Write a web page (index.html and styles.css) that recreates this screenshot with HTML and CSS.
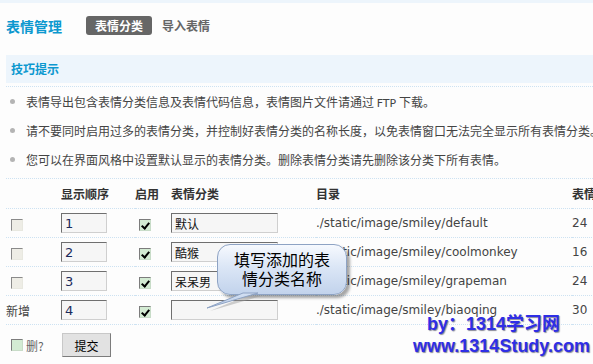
FILE: index.html
```html
<!DOCTYPE html>
<html>
<head>
    <meta charset="utf-8" />
    <title>表情管理</title>
    <link rel="stylesheet" href="styles.css">
</head>
<body>
<div class="topbar"></div>
<div class="head">
    <h1>表情管理</h1>
    <span class="tab on">表情分类</span>
    <span class="tab">导入表情</span>
</div>

<div class="tips">
    <h3>技巧提示</h3>
    <ul>
        <li>表情导出包含表情分类信息及表情代码信息，表情图片文件请通过 <span class="en">FTP</span> 下载。</li>
        <li>请不要同时启用过多的表情分类，并控制好表情分类的名称长度，以免表情窗口无法完全显示所有表情分类。</li>
        <li>您可以在界面风格中设置默认显示的表情分类。删除表情分类请先删除该分类下所有表情。</li>
    </ul>
</div>

<table class="grid">
    <colgroup>
        <col class="c1"><col class="c2"><col class="c3"><col class="c4"><col class="c5"><col class="c6">
    </colgroup>
    <tr>
        <th></th><th>显示顺序</th><th>启用</th><th>表情分类</th><th>目录</th><th>表情数</th>
    </tr>
    <tr>
        <td><span class="chk off"></span></td>
        <td><input class="inputClass order" value="1"></td>
        <td><span class="chk on"></span></td>
        <td><input class="inputClass name" value="默认"></td>
        <td class="dir">./static/image/smiley/default</td>
        <td class="num">24</td>
    </tr>
    <tr>
        <td><span class="chk off"></span></td>
        <td><input class="inputClass order" value="2"></td>
        <td><span class="chk on"></span></td>
        <td><input class="inputClass name" value="酷猴"></td>
        <td class="dir">./static/image/smiley/coolmonkey</td>
        <td class="num">16</td>
    </tr>
    <tr>
        <td><span class="chk off"></span></td>
        <td><input class="inputClass order" value="3"></td>
        <td><span class="chk on"></span></td>
        <td><input class="inputClass name" value="呆呆男"></td>
        <td class="dir">./static/image/smiley/grapeman</td>
        <td class="num">24</td>
    </tr>
    <tr>
        <td class="new">新增</td>
        <td><input class="inputClass order" value="4"></td>
        <td><span class="chk on"></span></td>
        <td><input class="inputClass name" value=""></td>
        <td class="dir">./static/image/smiley/biaoqing</td>
        <td class="num">30</td>
    </tr>
</table>

<div class="foot">
    <span class="chk del"></span><span class="delLabel">删?</span>
    <button class="buttonClass">提交</button>
</div>

<!-- callout over the table -->
<div class="bubble">填写添加的表<br>情分类名称</div>
<svg class="tail" width="70" height="30" viewBox="0 0 70 30">
    <defs>
        <linearGradient id="tailFill" x1="0" y1="0" x2="0" y2="1">
            <stop offset="0" stop-color="#d3e0f3"/>
            <stop offset="1" stop-color="#b9cbe6"/>
        </linearGradient>
    </defs>
    <polygon points="45,11 60,11 9,26" fill="#9a9a9a" opacity="0.45"/>
    <polygon points="42,8 57,8 6,23" fill="url(#tailFill)" stroke="#8ea3c4" stroke-width="1"/>
</svg>

<div class="mark">
    <div class="l1">by：1314学习网</div>
    <div class="l2">www.1314Study.com</div>
</div>
</body>
</html>
```

FILE: styles.css
```css
body {
    margin: 0; background-color: #fdfdfd; overflow: hidden;
    font-family: "Noto Sans CJK SC", "DejaVu Sans", sans-serif;
    font-size: 12px; color: #444;
}
.topbar {
    height: 3px; background-color: #edf5fc;
}
.head {
    height: 45px; padding-left: 6px;
    display: flex; align-items: center;
}
.head h1 {
    margin: 0 24px 0 0; font-size: 14px; font-weight: bold; color: #0c98cf;
}
.tab {
    height: 19px; line-height: 19px; padding: 0 9px; border-radius: 3px;
    font-weight: bold; color: #666; margin-right: 1px;
}
.tab.on {
    background-color: #666; color: #fff;
}
.tips {
    margin: 7px 0 0 6px;
}
.tips h3 {
    margin: 0; height: 28px; line-height: 28px; padding-left: 5px;
    background-color: #edf5fc; color: #0c98cf; font-size: 12px;
}
.tips ul {
    list-style: none; margin: 3px 0 0 0; padding: 0 0 4px 0;
    border-top: 1px dotted #cde2f2; border-bottom: 1px dotted #cde2f2;
}
.tips li {
    position: relative; height: 29px; line-height: 29px; padding-left: 20px;
    white-space: nowrap;
}
.tips li:before {
    content: ""; position: absolute; left: 4px; top: 12px;
    width: 5px; height: 5px; border-radius: 50%; background-color: #b4b4b4;
}
.en {
    font-family: "DejaVu Sans", sans-serif; font-size: 11px; color: #444;
}
.grid {
    margin-left: 6px; width: 640px; table-layout: fixed; border-collapse: collapse;
}
.c1 { width: 55px; }
.c2 { width: 74px; }
.c3 { width: 36px; }
.c4 { width: 145px; }
.c5 { width: 256px; }
.c6 { width: 74px; }
.grid th, .grid td {
    padding: 0; text-align: left; border-bottom: 1px dotted #cde2f2;
    white-space: nowrap; overflow: hidden;
}
.grid th {
    height: 29px; font-weight: bold; color: #333;
}
.grid td {
    height: 28px;
}
.grid td:first-child .chk { margin-left: 5px; }
.grid td:nth-child(3) .chk { margin-left: 4px; }
.new { color: #444; }
.dir, .num {
    font-family: "DejaVu Sans", sans-serif; font-size: 12px; color: #444;
}
.inputClass {
    box-sizing: border-box; height: 20px; margin: 0; padding: 0 3px;
    border: 1px solid; border-color: #6f6f6f #cfcfcf #cfcfcf #6f6f6f;
    background-color: #f6f6f6; vertical-align: middle;
    font-family: "Noto Sans CJK SC", sans-serif; font-size: 12px; color: #111;
}
.inputClass.order {
    width: 46px; font-family: "DejaVu Sans", sans-serif; font-size: 13px; color: #1a2a5a;
}
.inputClass.name { width: 107px; }
.chk {
    display: inline-block; position: relative; vertical-align: middle;
    box-sizing: border-box; width: 12px; height: 12px;
    border: 1px solid; border-color: #8a8a8a #e8e8e0 #e8e8e0 #8a8a8a;
    background-color: #eeede6;
}
.chk.on, .chk.del {
    border-color: #7c7c7c #c8dcc8 #c8dcc8 #7c7c7c; background-color: #d3ebd3;
}
.chk.on:after {
    content: ""; position: absolute; left: 3px; top: 1px;
    width: 3px; height: 6px; border: solid #000; border-width: 0 2px 2px 0;
    transform: rotate(40deg);
}
.foot {
    display: flex; align-items: center; height: 24px; padding: 8px 0 0 11px;
}
.delLabel {
    color: #666; margin-left: 3px; width: 36px;
}
.buttonClass {
    box-sizing: border-box; width: 49px; height: 24px; margin: 0; padding: 0;
    border: 1px solid; border-color: #c8c8c8 #7c7c7c #7c7c7c #c8c8c8;
    background-color: #e2e2e2; font-family: "Noto Sans CJK SC", sans-serif;
    font-size: 12px; color: #000;
}
.bubble {
    position: absolute; left: 217px; top: 244px; box-sizing: border-box;
    width: 130px; height: 51px; padding-top: 5px; border-radius: 13px;
    border: 1px solid #8ea3c4;
    background: linear-gradient(#f6f9fe, #dbe6f6 45%, #c2d3ec);
    box-shadow: 3px 3px 3px rgba(0, 0, 0, 0.35);
    text-align: center; font-size: 16px; line-height: 19px; color: #000;
}
.tail {
    position: absolute; left: 201px; top: 285px;
}
.mark {
    position: absolute; left: 410px; top: 313px;
    font-family: "Liberation Sans", "Noto Sans CJK SC", sans-serif;
    font-size: 18px; font-weight: bold; color: #2e2ee6;
    text-shadow: 1px 1px 1px #8a8a9a; line-height: 22px;
}
.mark .l1 { padding-left: 17px; }
.mark .l2 { padding-left: 3px; }
```
